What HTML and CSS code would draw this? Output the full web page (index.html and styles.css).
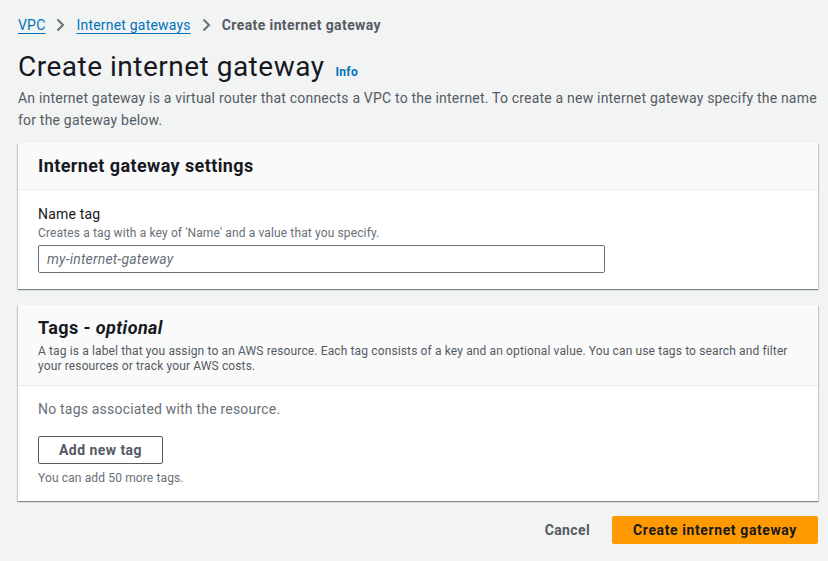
FILE: index.html
```html
<!DOCTYPE html>
<html lang="en">
<head>
<meta charset="utf-8">
<title>Create internet gateway</title>
<link rel="stylesheet" href="styles.css">
</head>
<body>
<div class="page">
  <nav class="crumbs">
    <a class="crumb-link" href="#">VPC</a>
    <svg class="chev" width="16" height="16" viewBox="0 0 16 16"><path d="M5.5 2.5 L11 8 L5.5 13.5" fill="none" stroke="#687078" stroke-width="2"/></svg>
    <a class="crumb-link" href="#">Internet gateways</a>
    <svg class="chev" width="16" height="16" viewBox="0 0 16 16"><path d="M5.5 2.5 L11 8 L5.5 13.5" fill="none" stroke="#687078" stroke-width="2"/></svg>
    <span class="crumb-current">Create internet gateway</span>
  </nav>

  <div class="title-row">
    <h1 class="title">Create internet gateway</h1>
    <a class="info" href="#">Info</a>
  </div>
  <p class="page-desc">An internet gateway is a virtual router that connects a VPC to the internet. To create a new internet gateway specify the name for the gateway below.</p>

  <section class="card">
    <div class="card-head">
      <h2 class="card-title">Internet gateway settings</h2>
    </div>
    <div class="card-body body-settings">
      <div class="field-label">Name tag</div>
      <div class="field-desc">Creates a tag with a key of 'Name' and a value that you specify.</div>
      <input class="text-input" type="text" placeholder="my-internet-gateway">
    </div>
  </section>

  <section class="card">
    <div class="card-head head-tags">
      <h2 class="card-title">Tags - <em>optional</em></h2>
      <p class="card-desc">A tag is a label that you assign to an AWS resource. Each tag consists of a key and an optional value. You can use tags to search and filter your resources or track your AWS costs.</p>
    </div>
    <div class="card-body body-tags">
      <div class="empty">No tags associated with the resource.</div>
      <button class="btn-normal" type="button">Add new tag</button>
      <div class="hint">You can add 50 more tags.</div>
    </div>
  </section>

  <div class="actions">
    <button class="btn-link" type="button">Cancel</button>
    <button class="btn-primary" type="button">Create internet gateway</button>
  </div>
</div>
</body>
</html>
```

FILE: styles.css
```css
* { box-sizing: border-box; }
html, body { margin: 0; padding: 0; }
body {
  background: #f2f3f3;
  font-family: Roboto, "Liberation Sans", sans-serif;
  color: #16191f;
  font-size: 14px;
  line-height: 22px;
  letter-spacing: 0.2px;
}
.page {
  padding: 14px 10px 0 18px;
}
.crumbs {
  display: flex;
  align-items: center;
  height: 22px;
}
.crumb-link {
  color: #0073bb;
  text-decoration: underline;
  text-underline-offset: 3px;
}
.chev {
  margin: 0 8px 0 7px;
}
.crumb-current {
  color: #545b64;
  font-weight: 700;
  letter-spacing: 0.4px;
}
.title-row {
  display: flex;
  align-items: baseline;
  margin-top: 13px;
}
.title {
  margin: 0;
  font-size: 28px;
  line-height: 36px;
  font-weight: 400;
  color: #16191f;
  letter-spacing: 0.5px;
}
.info {
  margin-left: 11px;
  font-size: 12px;
  font-weight: 700;
  color: #0073bb;
  text-decoration: none;
  letter-spacing: 0.3px;
}
.page-desc {
  margin: 2px 0 0;
  color: #545b64;
  line-height: 22px;
}
.card {
  margin-top: 12px;
  background: #fff;
  box-shadow: 0 1px 1px 0 rgba(0,28,36,.3), 1px 1px 1px 0 rgba(0,28,36,.15), -1px 1px 1px 0 rgba(0,28,36,.15);
}
.card + .card { margin-top: 16px; }
.card-head {
  background: #fafafa;
  border-bottom: 1px solid #eaeded;
  padding: 12px 20px;
}
.head-tags { padding: 12px 20px 11px; }
.card-title {
  margin: 0;
  font-size: 18px;
  line-height: 22px;
  font-weight: 700;
  letter-spacing: 0.4px;
}
.card-title em { font-style: italic; }
.card-desc {
  margin: 5px 0 0;
  font-size: 12px;
  line-height: 15px;
  color: #545b64;
  letter-spacing: 0.13px;
}
.card-body { padding: 13px 20px 16px; }
.field-label { line-height: 22px; color: #16191f; }
.field-desc { font-size: 12px; line-height: 16px; color: #687078; letter-spacing: 0.13px; }
.text-input {
  display: block;
  margin-top: 4px;
  width: 567px;
  height: 28px;
  border: 1px solid #687078;
  border-radius: 2px;
  padding: 0 8px;
  font-family: inherit;
  font-size: 14px;
  letter-spacing: 0.2px;
  color: #16191f;
  outline: none;
}
.text-input::placeholder { color: #687078; font-style: italic; }
.body-tags { padding: 12px 20px 15px; }
.empty { color: #687078; }
.btn-normal {
  display: block;
  margin-top: 16px;
  height: 28px;
  padding: 0 20px;
  background: #fff;
  border: 1px solid #545b64;
  border-radius: 2px;
  font-family: inherit;
  font-size: 14px;
  font-weight: 700;
  color: #545b64;
  letter-spacing: 0.45px;
}
.hint {
  margin-top: 6px;
  font-size: 12px;
  line-height: 16px;
  color: #687078;
  letter-spacing: 0.13px;
}
.actions {
  display: flex;
  justify-content: flex-end;
  align-items: center;
  margin-top: 15px;
}
.btn-link {
  background: none;
  border: 0;
  padding: 0;
  margin-right: 22px;
  font-family: inherit;
  font-size: 14px;
  font-weight: 700;
  color: #545b64;
  letter-spacing: 0.4px;
}
.btn-primary {
  height: 28px;
  padding: 0 20px;
  background: #ff9900;
  border: 1px solid #ff9900;
  border-radius: 2px;
  font-family: inherit;
  font-size: 14px;
  font-weight: 700;
  color: #16191f;
  letter-spacing: 0.6px;
}
```
